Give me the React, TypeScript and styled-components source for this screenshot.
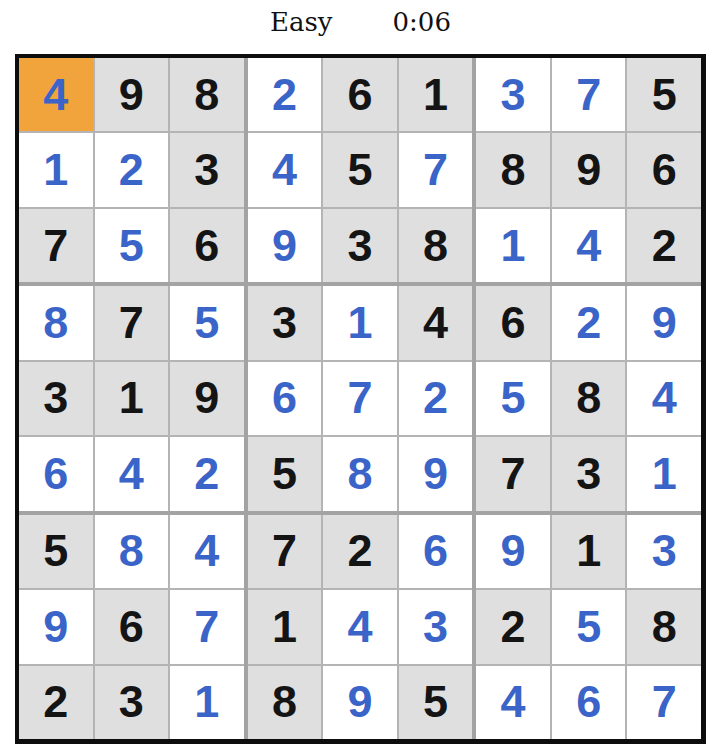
import styled, { createGlobalStyle } from "styled-components";

const GlobalStyle = createGlobalStyle`
  body {
    margin: 0;
    background: #ffffff;
  }
`;

type Kind = "given" | "entered" | "selected";

interface iCell {
  value: number;
  kind: Kind;
}

// g = given (grey, black), b = entered (white, blue), s = selected
const rows = [
  "4s 9g 8g 2b 6g 1g 3b 7b 5g",
  "1b 2b 3g 4b 5g 7b 8g 9g 6g",
  "7g 5b 6g 9b 3g 8g 1b 4b 2g",
  "8b 7g 5b 3g 1b 4g 6g 2b 9b",
  "3g 1g 9g 6b 7b 2b 5b 8g 4b",
  "6b 4b 2b 5g 8b 9b 7g 3g 1b",
  "5g 8b 4b 7g 2g 6b 9b 1g 3b",
  "9b 6g 7b 1g 4b 3b 2g 5b 8g",
  "2g 3g 1b 8g 9b 5g 4b 6b 7b",
];

const kindOf: Record<string, Kind> = { g: "given", b: "entered", s: "selected" };

const board: iCell[][] = rows.map((r) =>
  r.split(" ").map((t) => ({ value: Number(t[0]), kind: kindOf[t[1]] }))
);

function boxCells(box: number) {
  const br = Math.floor(box / 3) * 3;
  const bc = (box % 3) * 3;
  const out: iCell[] = [];
  for (let r = 0; r < 3; r++) {
    for (let c = 0; c < 3; c++) out.push(board[br + r][bc + c]);
  }
  return out;
}

export default function App() {
  return (
    <>
      <GlobalStyle />
      <Page>
        <Header>
          <span>Easy</span>
          <span>0:06</span>
        </Header>
        <Board>
          {Array.from({ length: 9 }, (_, b) => (
            <Box key={b}>
              {boxCells(b).map((cell, i) => (
                <Cell key={i} $kind={cell.kind}>
                  {cell.value}
                </Cell>
              ))}
            </Box>
          ))}
        </Board>
      </Page>
    </>
  );
}

const Page = styled.div`
  width: 720px;
  padding: 0 14px 0 15px;
  box-sizing: border-box;
`;

const Header = styled.div`
  display: flex;
  justify-content: center;
  gap: 60px;
  padding-top: 7px;
  margin-bottom: 16px;
  height: 31px;
  line-height: 31px;
  font-family: "DejaVu Serif", "Liberation Serif", serif;
  font-size: 26px;
  color: #111111;
`;

const Board = styled.div`
  width: 691px;
  height: 690px;
  box-sizing: border-box;
  border: 4px solid #0d0d0d;
  border-right-width: 5px;
  border-bottom-width: 5px;
  background: #a3a3a3;
  display: grid;
  grid-template-columns: repeat(3, 1fr);
  grid-template-rows: repeat(3, 1fr);
  gap: 4px;
`;

const Box = styled.div`
  display: grid;
  grid-template-columns: repeat(3, 1fr);
  grid-template-rows: repeat(3, 1fr);
  gap: 2px;
  background: #b4b4b4;
`;

const Cell = styled.div<{ $kind: Kind }>`
  display: flex;
  align-items: center;
  justify-content: center;
  font-family: "Liberation Sans", Arial, sans-serif;
  font-weight: 700;
  font-size: 45px;
  background: ${(p) =>
    p.$kind === "selected" ? "#f1a33c" : p.$kind === "given" ? "#dfdfdf" : "#ffffff"};
  color: ${(p) => (p.$kind === "given" ? "#141414" : "#3a64c8")};
`;
